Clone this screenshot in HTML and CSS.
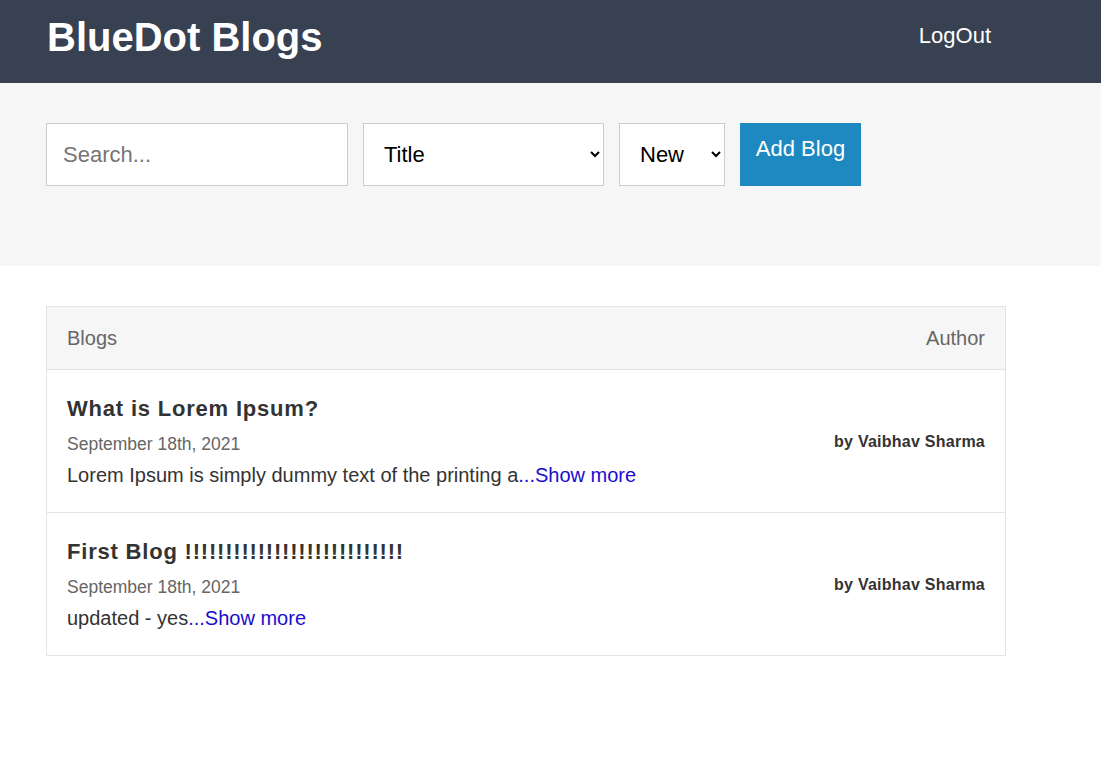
FILE: index.html
```html
<!DOCTYPE html>
<html lang="en">
<head>
<meta charset="utf-8">
<title>BlueDot Blogs</title>
<link rel="stylesheet" href="styles.css">
</head>
<body>
<header class="topbar">
  <h1 class="brand">BlueDot Blogs</h1>
  <a class="logout" href="#">LogOut</a>
</header>
<section class="toolbar">
  <input class="search" type="text" placeholder="Search...">
  <select class="select select-field">
    <option>Title</option>
    <option>Author</option>
  </select>
  <select class="select select-order">
    <option>New</option>
    <option>Old</option>
  </select>
  <button class="add-btn">Add Blog</button>
</section>
<main class="content">
  <div class="blog-table">
    <div class="table-head">
      <span>Blogs</span>
      <span>Author</span>
    </div>
    <div class="blog-row">
      <div class="blog-main">
        <h2 class="blog-title">What is Lorem Ipsum?</h2>
        <div class="blog-date">September 18th, 2021</div>
        <p class="blog-text">Lorem Ipsum is simply dummy text of the printing a<a href="#" class="more">...Show more</a></p>
      </div>
      <div class="blog-author">by Vaibhav Sharma</div>
    </div>
    <div class="blog-row">
      <div class="blog-main">
        <h2 class="blog-title">First Blog !!!!!!!!!!!!!!!!!!!!!!!!!!!</h2>
        <div class="blog-date">September 18th, 2021</div>
        <p class="blog-text">updated - yes<a href="#" class="more">...Show more</a></p>
      </div>
      <div class="blog-author">by Vaibhav Sharma</div>
    </div>
  </div>
</main>
</body>
</html>
```
FILE: styles.css
```css
* { box-sizing: border-box; }
body {
  margin: 0;
  font-family: "Liberation Sans", Arial, sans-serif;
  background: #ffffff;
  color: #333333;
}
.topbar {
  height: 83px;
  background: #374151;
  display: flex;
  align-items: center;
  justify-content: space-between;
  padding: 0 110px 0 47px;
}
.brand {
  margin: 0;
  font-size: 40px;
  font-weight: bold;
  color: #ffffff;
  line-height: 1;
  position: relative;
  top: -5px;
}
.logout {
  color: #ffffff;
  text-decoration: none;
  font-size: 22px;
  position: relative;
  top: -6px;
}
.toolbar {
  background: #f6f6f6;
  height: 183px;
  padding: 40px 46px;
  display: flex;
  align-items: flex-start;
  gap: 15px;
}
.search, .select, .add-btn {
  height: 63px;
  font-family: "Liberation Sans", Arial, sans-serif;
  font-size: 22px;
  border-radius: 0;
}
.search {
  width: 302px;
  border: 1px solid #cccccc;
  background: #ffffff;
  padding: 0 16px;
  color: #333;
  outline: none;
}
.search::placeholder { color: #757575; }
.select {
  border: 1px solid #cccccc;
  background: #ffffff;
  color: #000000;
  padding: 0 10px 0 16px;
}
.select-field { width: 241px; }
.select-order { width: 106px; }
.add-btn {
  width: 121px;
  background: #1e88c0;
  color: #ffffff;
  border: none;
  padding: 13px 14px 0;
  display: flex;
  align-items: flex-start;
  justify-content: center;
  line-height: 26px;
}
.content {
  padding: 40px 46px;
}
.blog-table {
  width: 960px;
  border: 1px solid #e3e3e3;
}
.table-head {
  height: 63px;
  background: #f6f6f6;
  border-bottom: 1px solid #e3e3e3;
  display: flex;
  align-items: center;
  justify-content: space-between;
  padding: 0 20px;
  font-size: 20px;
  color: #666666;
}
.blog-row {
  display: flex;
  align-items: center;
  justify-content: space-between;
  padding: 23px 20px 22px;
  border-bottom: 1px solid #e3e3e3;
}
.blog-row:last-child { border-bottom: none; }
.blog-title {
  margin: 0;
  font-size: 22px;
  line-height: 32px;
  letter-spacing: 0.8px;
  font-weight: bold;
  color: #333333;
}
.blog-date {
  margin-top: 7px;
  font-size: 17.5px;
  line-height: 24px;
  color: #666666;
}
.blog-text {
  margin: 4px 0 0;
  font-size: 20px;
  line-height: 30px;
  color: #333333;
}
.more {
  color: #1a0dd0;
  text-decoration: none;
}
.blog-author {
  font-size: 16px;
  font-weight: bold;
  letter-spacing: 0.25px;
  color: #333333;
}
```
